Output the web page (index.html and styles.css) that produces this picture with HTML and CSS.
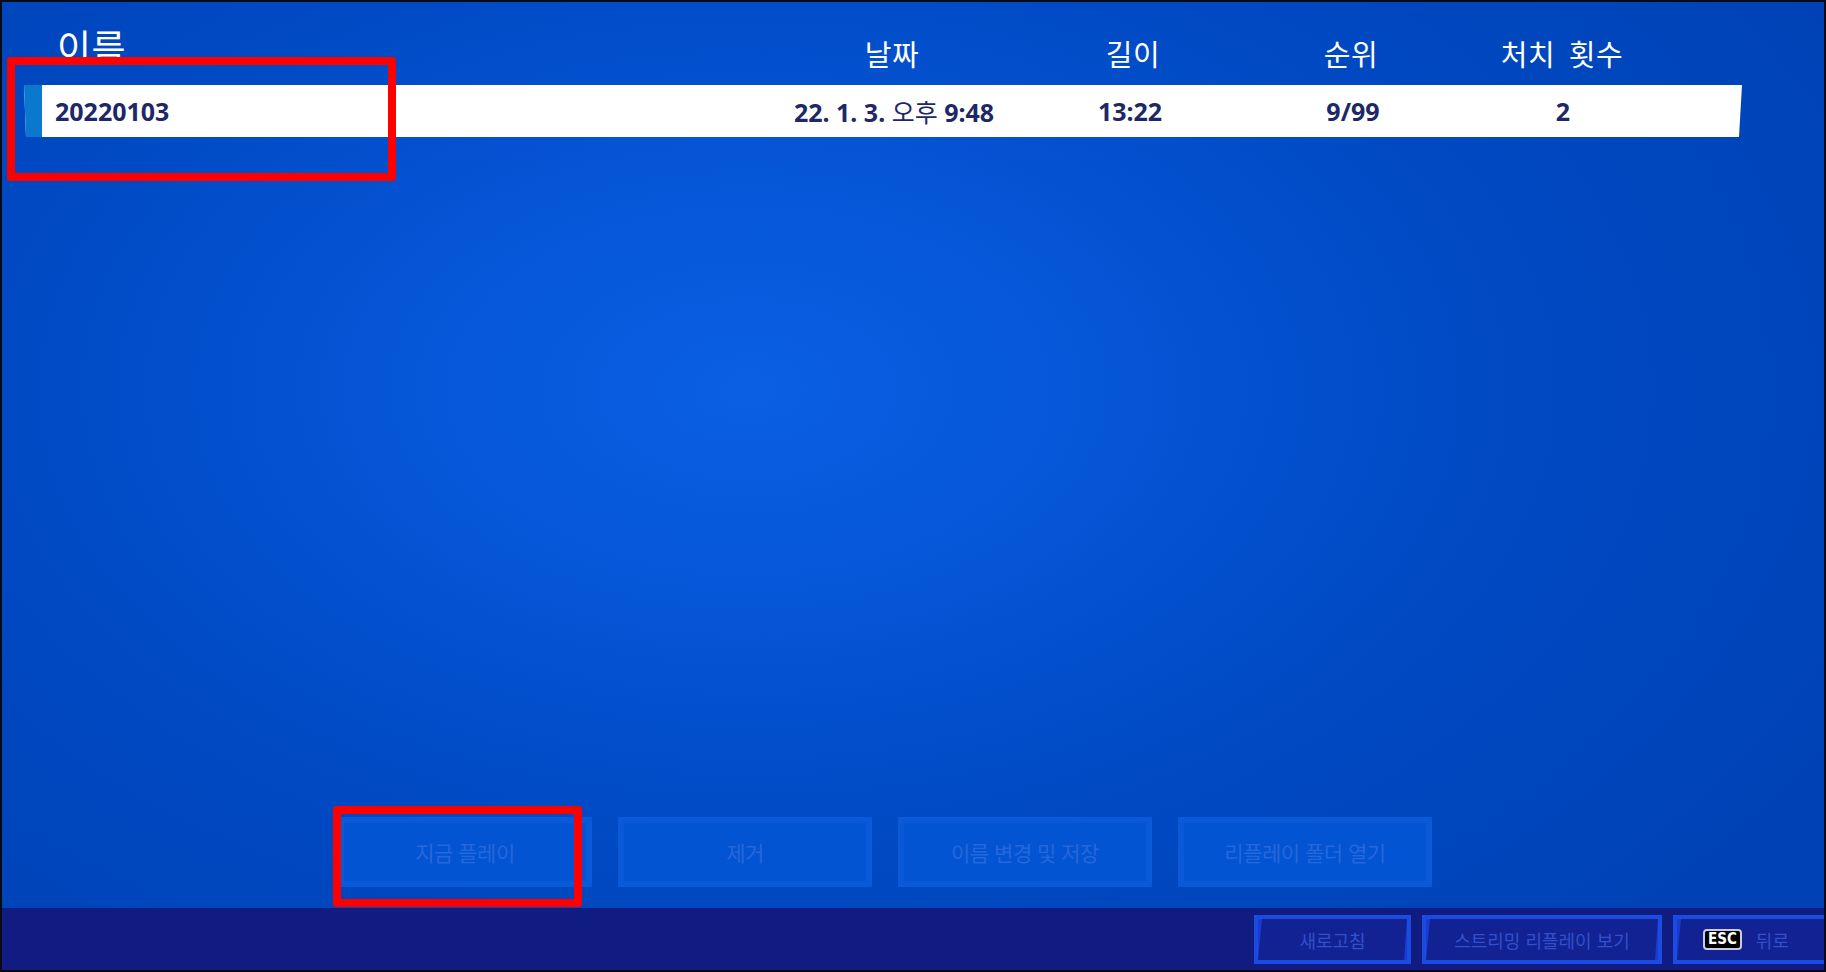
FILE: index.html
```html
<!DOCTYPE html>
<html lang="ko">
<head>
    <meta charset="UTF-8">
    <meta name="viewport" content="width=device-width, initial-scale=1.0">
    <title>리플레이</title>
    <link rel="stylesheet" href="styles.css">
</head>
<body>
    <div class="screen">
        <div class="list-head">
            <div class="col col-name">이름</div>
            <div class="col">날짜</div>
            <div class="col">길이</div>
            <div class="col">순위</div>
            <div class="col">처치 횟수</div>
        </div>

        <div class="replay-row">
            <div class="col col-name">20220103</div>
            <div class="col">22. 1. 3. <span class="ko">오후</span> 9:48</div>
            <div class="col">13:22</div>
            <div class="col">9/99</div>
            <div class="col">2</div>
        </div>

        <div class="actions">
            <button class="action">지금 플레이</button>
            <button class="action">제거</button>
            <button class="action">이름 변경 및 저장</button>
            <button class="action">리플레이 폴더 열기</button>
        </div>

        <div class="footer-bar">
            <button class="bar-btn refresh"><span>새로고침</span></button>
            <button class="bar-btn stream"><span>스트리밍 리플레이 보기</span></button>
            <button class="bar-btn back"><span><kbd class="key">ESC</kbd> 뒤로</span></button>
        </div>

        <!-- annotation boxes -->
        <div class="mark mark-row"></div>
        <div class="mark mark-play"></div>
    </div>
</body>
</html>
```

FILE: styles.css
```css
* {
    box-sizing: border-box;
}
html, body {
    margin: 0;
    padding: 0;
    background: #0a0a12;
}
body {
    font-family: "Noto Sans CJK KR", "Noto Sans", sans-serif;
}
.screen {
    position: relative;
    width: 1826px;
    height: 972px;
    border: 2px solid #0a0a14;
    overflow: hidden;
    display: flex;
    flex-direction: column;
    background: radial-gradient(ellipse 68% 78% at 41% 40%, #0a5fe2 0%, #0656d8 28%, #004ac4 58%, #0042b6 100%);
}

/* list */
.list-head,
.replay-row {
    display: grid;
    margin-left: 22px;
    width: 1718px;
}
.list-head {
    grid-template-columns: 722px 292px 190px 246px 176px 1fr;
    height: 83px;
    align-items: end;
    padding-bottom: 17px;
    color: #fff;
    font-size: 29px;
    line-height: 1;
}
.list-head .col {
    text-align: center;
    letter-spacing: 0.5px;
    word-spacing: 5px;
}
.list-head .col-name {
    text-align: left;
    padding-left: 33px;
    font-size: 37px;
    align-self: start;
    margin-top: 26px;
}
.replay-row {
    grid-template-columns: 706px 292px 180px 266px 154px 1fr;
    height: 52px;
    align-items: center;
    background: #fff;
    border-left: 18px solid #0a78cc;
    clip-path: polygon(0 0, 100% 0, calc(100% - 3px) 100%, 2px 100%);
    color: #1e2866;
    font-family: "Noto Sans", "Noto Sans CJK KR", sans-serif;
    font-weight: 700;
    font-size: 25px;
}
.replay-row .col {
    text-align: center;
}
.replay-row .col-name {
    text-align: left;
    padding-left: 13px;
}
.replay-row .ko {
    font-family: "Noto Sans CJK KR", sans-serif;
    font-weight: 400;
}

/* action buttons */
.actions {
    margin-top: auto;
    margin-bottom: 21px;
    padding-left: 336px;
    display: flex;
    gap: 26px;
}
.action {
    width: 254px;
    height: 70px;
    border: none;
    background: #0354d2;
    box-shadow: inset 0 0 0 6px #0959d9;
    color: #2667dc;
    font-family: "Noto Sans CJK KR", sans-serif;
    font-size: 21px;
    letter-spacing: -0.5px;
}

/* footer bar */
.footer-bar {
    height: 62px;
    background: #111c82;
    display: flex;
    gap: 11px;
    padding: 7px 0 6px 1252px;
}
.bar-btn {
    flex: none;
    height: 49px;
    padding: 0;
    border: 4px solid #1a4ce2;
    background: #1a3bd0;
    font-family: "Noto Sans CJK KR", sans-serif;
    font-size: 18px;
    color: #3051cb;
}
.bar-btn span {
    display: flex;
    align-items: center;
    justify-content: center;
    height: 100%;
    background: #132292;
    clip-path: polygon(4px 0, 100% 0, calc(100% - 3px) 100%, 0 100%);
}
.refresh {
    width: 157px;
}
.stream {
    width: 240px;
}
.back {
    width: 180px;
}
.back span {
    justify-content: flex-start;
    padding-left: 26px;
    gap: 14px;
}
.key {
    display: inline-block;
    background: #000;
    color: #fff;
    border: 2px solid #c9cbe0;
    border-radius: 4px;
    padding: 1px 3px;
    font-family: "Liberation Sans Narrow", "DejaVu Sans Condensed", sans-serif;
    font-weight: 700;
    font-size: 15px;
    line-height: 15px;
}

/* red annotation boxes */
.mark {
    position: absolute;
    border: 8px solid #ff0000;
    border-radius: 3px;
}
.mark-row {
    left: 5px;
    top: 55px;
    width: 389px;
    height: 124px;
}
.mark-play {
    left: 331px;
    top: 804px;
    width: 249px;
    height: 101px;
}
```
